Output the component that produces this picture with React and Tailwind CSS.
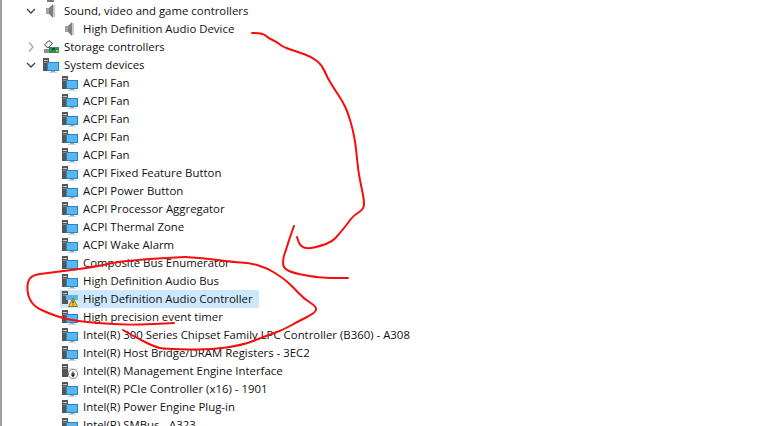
import React from 'react';

// red marker strokes drawn over the tree
const inkStrokes = [
  [[252, 33], [263, 33], [268, 38], [277, 42], [283, 47], [298, 52], [312, 57], [322, 65], [327, 77], [335, 90], [343, 102], [348, 113], [353, 130], [356, 147], [358, 170], [362, 190], [364, 200], [364, 209], [353, 216], [348, 223], [340, 233], [332, 242], [320, 246], [308, 249], [300, 246], [297, 237]],
  [[294, 226], [290, 237], [286, 250], [283, 258], [283, 268], [293, 273], [315, 277], [330, 278], [348, 278]],
  [[185, 257], [203, 258], [233, 262], [250, 263], [267, 268], [283, 278], [293, 287], [303, 298], [317, 307], [315, 313], [297, 322], [283, 330], [263, 337], [243, 345], [210, 350], [170, 349], [157, 348], [137, 338], [123, 330]],
  [[185, 257], [125, 260], [95, 267], [48, 273], [32, 275], [27, 283], [28, 297], [35, 307], [48, 313], [65, 319], [85, 322], [125, 325], [155, 324], [174, 323]],
];

const toPath = (pts) => {
  let d = `M${pts[0][0]} ${pts[0][1]}`;
  for (let i = 1; i < pts.length - 1; i++) {
    const mx = (pts[i][0] + pts[i + 1][0]) / 2;
    const my = (pts[i][1] + pts[i + 1][1]) / 2;
    d += ` Q${pts[i][0]} ${pts[i][1]} ${mx} ${my}`;
  }
  const last = pts[pts.length - 1];
  return `${d} L${last[0]} ${last[1]}`;
};

const Tower = () => (
  <>
    <rect x="0" y="1" width="6" height="13" fill="#555555" />
    <rect x="1" y="3" width="4" height="1" fill="#c9c9c9" />
    <rect x="1" y="5" width="4" height="1" fill="#8d8d8d" />
  </>
);

const MonitorIcon = () => (
  <svg width="16" height="16" viewBox="0 0 16 16" className="shrink-0">
    <Tower />
    <rect x="4" y="5" width="12" height="9" fill="#1c87cf" />
    <rect x="5" y="6" width="10" height="7" fill="#5cb6ee" />
    <rect x="8" y="14" width="4" height="1" fill="#a8a8a8" />
    <rect x="6" y="15" width="8" height="1" fill="#d0d0d0" />
  </svg>
);

const WarningIcon = () => (
  <svg width="16" height="18" viewBox="0 0 16 18" className="shrink-0">
    <Tower />
    <rect x="4" y="5" width="12" height="5" fill="#5cb6ee" />
    <path d="M11 8 L15.6 16.5 L6.4 16.5 Z" fill="#f6c52a" stroke="#7d6216" strokeWidth="0.8" />
    <rect x="10.5" y="10.5" width="1" height="3" fill="#222" />
    <rect x="10.5" y="14.5" width="1" height="1" fill="#222" />
  </svg>
);

const EngineIcon = () => (
  <svg width="16" height="16" viewBox="0 0 16 16" className="shrink-0 overflow-visible">
    <Tower />
    <rect x="6" y="5" width="10" height="3" fill="#e3e9ee" />
    <circle cx="11" cy="11" r="4.6" fill="#fff" stroke="#8a8a8a" />
    <path d="M11 8.5 V13 M9 11 H13 M9.6 12 L11 13.4 L12.4 12" stroke="#222" strokeWidth="1.1" fill="none" />
  </svg>
);

const SpeakerIcon = () => (
  <svg width="16" height="16" viewBox="0 0 16 16" className="shrink-0">
    <rect x="3" y="5" width="3" height="6" fill="#a3a3a3" />
    <path d="M6 5 L10 1 V15 L6 11 Z" fill="#808080" />
    <rect x="10" y="2" width="2" height="12" fill="#c9c9c9" />
  </svg>
);

const StorageIcon = () => (
  <svg width="16" height="16" viewBox="0 0 16 16" className="shrink-0">
    <path d="M1.5 6 L6 1.5 L9.5 4.5 L5 9 Z" fill="#f4f4f4" stroke="#4a4a4a" />
    <rect x="1" y="10" width="7" height="4" fill="#8f8f8f" />
    <rect x="6" y="8" width="10" height="6" fill="#2f9150" />
    <rect x="9" y="9" width="3" height="2" fill="#17552e" />
    <rect x="13" y="11" width="2" height="2" fill="#c9b34a" />
  </svg>
);

const Chevron = ({ open }) => (
  <svg width="10" height="10" viewBox="0 0 10 10" className="shrink-0">
    {open
      ? <path d="M1 3 L5 7 L9 3" fill="none" stroke="#404040" strokeWidth="1.3" />
      : <path d="M3 0.5 L7 5 L3 9.5" fill="none" stroke="#a6a6a6" strokeWidth="1.3" />}
  </svg>
);

const Row = ({ icon, label, selected }) => (
  <div className="flex h-[18px] pl-[60px]">
    <div className={`flex h-[18px] items-center pl-[2px] ${selected ? 'bg-[#cce8ff] pr-[6px]' : 'pr-[3px]'}`}>
      {icon || <MonitorIcon />}
      <span className="ml-[5px] leading-[18px]">{label}</span>
    </div>
  </div>
);

const Group = ({ open, icon, label }) => (
  <div className="flex h-[18px] items-center pl-[26px]">
    <Chevron open={open} />
    <span className="ml-[7px] flex">{icon}</span>
    <span className="ml-[5px] leading-[18px]">{label}</span>
  </div>
);

const devices = ['ACPI Fan', 'ACPI Fan', 'ACPI Fan', 'ACPI Fan', 'ACPI Fan', 'ACPI Fixed Feature Button', 'ACPI Power Button', 'ACPI Processor Aggregator', 'ACPI Thermal Zone', 'ACPI Wake Alarm', 'Composite Bus Enumerator', 'High Definition Audio Bus'];

export default function App() {
  return (
    <div className="relative h-[426px] w-[764px] overflow-hidden bg-white text-[11.4px] text-[#111] [font-family:'Open_Sans','Noto_Sans',sans-serif]">
      <div className="absolute left-0 top-0 h-full w-[2px] bg-[#a0a0a0]" />
      <div className="absolute left-[47px] top-0 h-[2px] w-[7px] bg-[#7a7a7a]" />
      <div className="pt-[2px]">
        <Group open icon={<SpeakerIcon />} label="Sound, video and game controllers" />
        <Row icon={<SpeakerIcon />} label="High Definition Audio Device" />
        <Group icon={<StorageIcon />} label="Storage controllers" />
        <Group open icon={<MonitorIcon />} label="System devices" />
        {devices.map((name, i) => <Row key={i} label={name} />)}
        <Row icon={<WarningIcon />} label="High Definition Audio Controller" selected />
        <Row label="High precision event timer" />
        <Row label="Intel(R) 300 Series Chipset Family LPC Controller (B360) - A308" />
        <Row label="Intel(R) Host Bridge/DRAM Registers - 3EC2" />
        <Row icon={<EngineIcon />} label="Intel(R) Management Engine Interface" />
        <Row label="Intel(R) PCIe Controller (x16) - 1901" />
        <Row label="Intel(R) Power Engine Plug-in" />
        <Row label="Intel(R) SMBus - A323" />
      </div>
      <svg width="764" height="426" viewBox="0 0 764 426" className="absolute left-0 top-0">
        {inkStrokes.map((pts, i) => (
          <path key={i} d={toPath(pts)} fill="none" stroke="#f80c0c" strokeWidth="2" strokeLinejoin="round" strokeLinecap="round" />
        ))}
      </svg>
    </div>
  );
}
